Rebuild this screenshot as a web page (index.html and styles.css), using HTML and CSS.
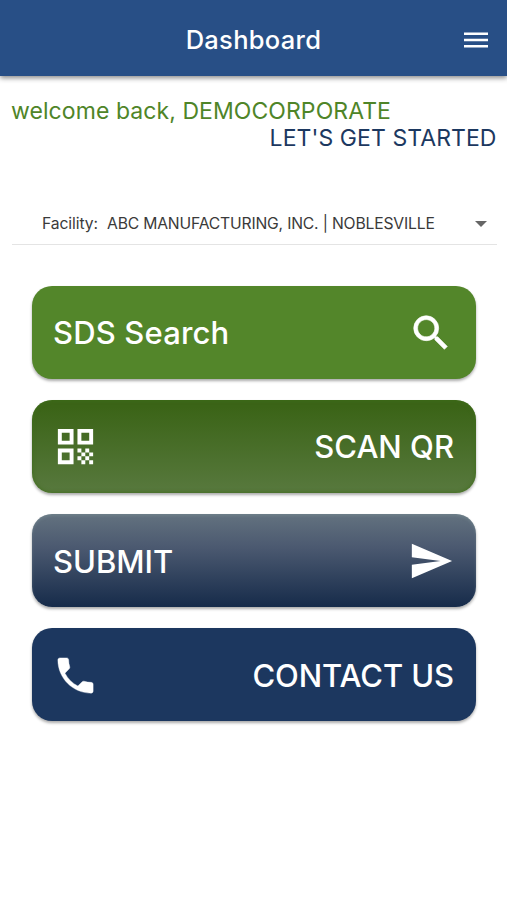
FILE: index.html
```html
<!DOCTYPE html>
<html lang="en">
<head>
<meta charset="utf-8">
<title>Dashboard</title>
<link rel="stylesheet" href="styles.css">
</head>
<body>
<header class="bar">
  <span></span>
  <h1>Dashboard</h1>
  <svg class="menu" viewBox="0 0 24 24"><path d="M2.4 18h19.2v-2H2.4zm0-5h19.2v-2H2.4zm0-7v2h19.2V6z"/></svg>
</header>
<main>
  <section class="welcome">
    <p class="hello">welcome back, DEMOCORPORATE</p>
    <p class="start">LET'S GET STARTED</p>
  </section>
  <div class="facility">
    <span class="label">Facility:</span>
    <span class="value">ABC MANUFACTURING, INC. | NOBLESVILLE</span>
    <i class="caret"></i>
  </div>
  <nav>
    <a class="card search"><span>SDS Search</span><svg viewBox="0 0 24 24"><path d="M15.5 14h-.79l-.28-.27A6.47 6.47 0 0 0 16 9.5 6.5 6.5 0 1 0 9.5 16c1.61 0 3.09-.59 4.23-1.57l.27.28v.79l5 4.99L20.49 19zm-6 0C7.01 14 5 11.99 5 9.5S7.01 5 9.5 5 14 7.01 14 9.5 11.99 14 9.5 14"/></svg></a>
    <a class="card scan"><svg viewBox="0 0 24 24"><path d="M3 11h8V3H3zm2-6h4v4H5zM3 21h8v-8H3zm2-6h4v4H5zM13 3v8h8V3zm6 6h-4V5h4zM19 19h2v2h-2zM13 13h2v2h-2zM15 15h2v2h-2zM13 17h2v2h-2zM15 19h2v2h-2zM17 17h2v2h-2zM17 13h2v2h-2zM19 15h2v2h-2z"/></svg><span>SCAN QR</span></a>
    <a class="card submit"><span>SUBMIT</span><svg viewBox="0 0 24 24"><path d="M2.01 21 23 12 2.01 3 2 10l15 2-15 2z"/></svg></a>
    <a class="card contact"><svg viewBox="0 0 24 24"><path d="M6.62 10.79c1.44 2.83 3.76 5.14 6.59 6.59l2.2-2.2c.27-.27.67-.36 1.02-.24 1.12.37 2.33.57 3.57.57.55 0 1 .45 1 1V20c0 .55-.45 1-1 1-9.39 0-17-7.61-17-17 0-.55.45-1 1-1h3.5c.55 0 1 .45 1 1 0 1.25.2 2.45.57 3.57.11.35.03.74-.25 1.02z"/></svg><span>CONTACT US</span></a>
  </nav>
</main>
</body>
</html>
```
FILE: styles.css
```css
*{box-sizing:border-box}
body{margin:0;background:#fff;font-family:Inter,sans-serif;height:900px}
h1,p{margin:0}
.bar{height:76px;background:#284f86;color:#fff;display:grid;grid-template-columns:1fr auto 1fr;align-items:center;padding:4px 16px 0;box-shadow:0 2px 5px #0007}
h1{font-size:25.5px;font-weight:500;line-height:40px;letter-spacing:.3px}
.menu{width:30px;height:30px;fill:#fff;justify-self:end}
.welcome{padding:22px 10.5px 0 11px;font-size:23px;line-height:27px;letter-spacing:.07px}
.hello{color:#4f8528}
.start{color:#1c3860;text-align:right}
.facility{margin:51px 10px 0 12px;height:42px;border-bottom:1px solid #e4e4e4;display:flex;align-items:center;padding:0 10px 0 30px;font-size:15.7px;letter-spacing:-.18px;color:#3a3a3a}
.label{width:65px;letter-spacing:-.1px}
.caret{margin-left:auto;border:6.5px solid transparent;border-top-color:#666;border-bottom:0}
nav{display:grid;gap:21px;padding:41px 31px 0 32px}
.card{height:93px;border-radius:20px;color:#fff;display:flex;align-items:center;justify-content:space-between;padding:1px 22px 0 21px;font-size:31px;font-weight:500;box-shadow:0 2px 3px #0005}
.card svg{width:46px;height:46px;fill:#fff}
.search{background:#53862a;letter-spacing:.15px;padding-top:0}
.search svg{stroke:#fff;stroke-width:.35}
.scan{background:linear-gradient(#3b6417 8%,#58793e);box-shadow:inset 0 0 4px #3e6d1a,0 2px 3px #0005;padding:0 22px 0 20px}
.scan svg{width:47px;height:47px}
.submit{background:linear-gradient(#63727f,#4b5970 36%,#162b4a);box-shadow:inset 0 2px 3px #7d949966,0 2px 3px #0005}
.contact{background:#1c375f}
.contact span{letter-spacing:-.1px}
.contact svg{width:47px;height:47px;margin-left:-1px;stroke:#fff;stroke-width:.2}
```
